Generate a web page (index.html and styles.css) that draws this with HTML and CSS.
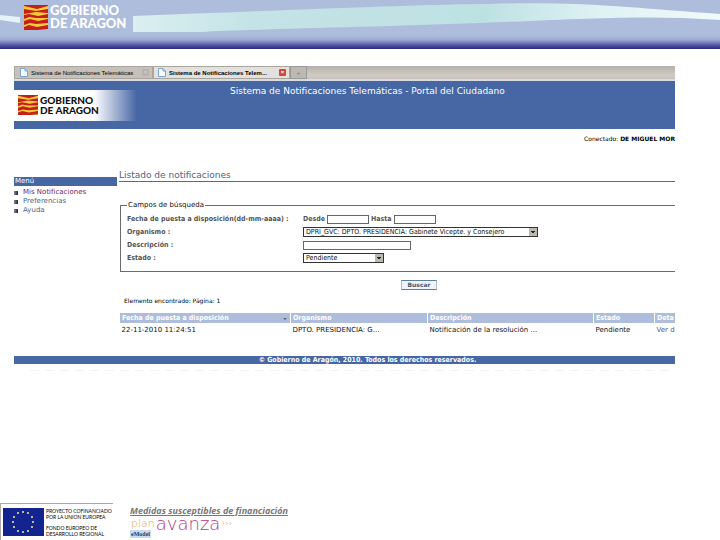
FILE: index.html
```html
<!DOCTYPE html>
<html lang="es">
<head>
<meta charset="utf-8">
<title>Sistema de Notificaciones Telemáticas</title>
<link rel="stylesheet" href="styles.css">
</head>
<body>
<svg class="symbols" aria-hidden="true">
  <symbol id="flag" viewBox="0 0 24 25" preserveAspectRatio="none">
    <rect width="24" height="25" fill="#f8c93c"/>
    <path fill="#c51f1b" d="M0 0H24V1L13 4L0 1ZM0 4L12 6L24 4V8L12 7L0 9ZM0 10L5 9L14 11L24 9V13L12 13L5 12L0 14ZM0 16L6 14L14 16L24 14V18L12 19L6 18L0 20ZM0 22L5 20L13 22L24 20V24L14 25H0Z"/>
  </symbol>
  <symbol id="page" viewBox="0 0 8 9">
    <path d="M.5.5h4.500l2.500 2.500v5.500h-7z" fill="#f4faff" stroke="#7fa3d0"/>
    <path d="M5 .5v2.500h2.500" fill="#b5d0f0" stroke="#7fa3d0"/>
  </symbol>
</svg>

<header class="banner">
  <svg class="wave" viewBox="0 0 720 49" preserveAspectRatio="none" aria-hidden="true">
    <defs>
      <linearGradient id="sea">
        <stop offset="0" stop-color="#dbeff1"/><stop offset=".2" stop-color="#c4e3e6"/>
        <stop offset=".6" stop-color="#bde1e3"/><stop offset=".8" stop-color="#e0f2f4"/>
        <stop offset="1" stop-color="#f0fafa"/>
      </linearGradient>
    </defs>
    <path fill="#e4f3f8" d="M0 15L20 17V23L0 20Z"/>
    <path fill="url(#sea)" d="M133 16C270 11 400 5 480 4C590 1 640 9 720 14V20C650 15 600 18 480 23C370 27 260 29 200 32H133Z"/>
  </svg>
  <div class="logo logo-light">
    <svg class="flag" aria-hidden="true"><use href="#flag"/></svg>
    <span>GOBIERNO<br>DE ARAGON</span>
  </div>
</header>

<main class="portal">
  <div class="tabs">
    <div class="tab"><svg class="page" aria-hidden="true"><use href="#page"/></svg><span>Sistema de Notificaciones Telemáticas</span><button class="close off" aria-label="Cerrar">×</button></div>
    <div class="tab active"><svg class="page" aria-hidden="true"><use href="#page"/></svg><span>Sistema de Notificaciones Telem...</span><button class="close" aria-label="Cerrar">×</button></div>
    <button class="new-tab" aria-label="Nueva pestaña">+</button>
  </div>

  <div class="masthead">
    <div class="brand">
      <div class="logo logo-dark">
        <svg class="flag" aria-hidden="true"><use href="#flag"/></svg>
        <span>GOBIERNO<br>DE ARAGON</span>
      </div>
    </div>
    <h1>Sistema de Notificaciones Telemáticas - Portal del Ciudadano</h1>
  </div>

  <p class="user">Conectado: <b>DE MIGUEL MOR</b></p>

  <div class="columns">
    <nav class="menu">
      <h2>Menú</h2>
      <ul>
        <li><a class="visited" href="#">Mis Notificaciones</a></li>
        <li><a href="#">Preferencias</a></li>
        <li><a href="#">Ayuda</a></li>
      </ul>
    </nav>

    <section class="content">
      <h2>Listado de notificaciones</h2>
      <form>
        <fieldset>
          <legend>Campos de búsqueda</legend>
          <div class="fields">
            <span class="label">Fecha de puesta a disposición(dd-mm-aaaa) :</span>
            <div class="dates">
              <label for="desde">Desde</label><input id="desde" type="text">
              <label for="hasta">Hasta</label><input id="hasta" type="text">
            </div>
            <label for="organismo">Organismo :</label>
            <div class="select wide"><select id="organismo"><option>DPRI_GVC: DPTO. PRESIDENCIA: Gabinete Vicepte. y Consejero</option></select></div>
            <label for="descripcion">Descripción :</label>
            <input class="description" id="descripcion" type="text">
            <label for="estado">Estado :</label>
            <div class="select"><select id="estado"><option>Pendiente</option></select></div>
          </div>
        </fieldset>
        <button class="search" type="button">Buscar</button>
      </form>
      <p class="count">Elemento encontrado: Página: 1</p>
      <table>
        <thead><tr><th class="c-date">Fecha de puesta a disposición<i class="sort"></i></th><th class="c-org">Organismo</th><th class="c-desc">Descripción</th><th class="c-state">Estado</th><th>Deta</th></tr></thead>
        <tbody><tr><td>22-11-2010 11:24:51</td><td>DPTO. PRESIDENCIA: G...</td><td>Notificación de la resolución ...</td><td>Pendiente</td><td><a href="#">Ver d</a></td></tr></tbody>
      </table>
    </section>
  </div>
  <p class="copyright">© Gobierno de Aragón, 2010. Todos los derechos reservados.</p>
  <div class="trace"></div>
</main>

<footer class="funding">
  <div class="eu">
    <svg class="eu-flag" viewBox="0 0 41 28" aria-hidden="true">
      <rect width="41" height="28" fill="#14248e"/>
      <g fill="#f0ee9a">
        <circle cx="20" cy="4" r="1"/><circle cx="25" cy="5" r="1"/><circle cx="29" cy="9" r="1"/>
        <circle cx="30" cy="14" r="1"/><circle cx="29" cy="19" r="1"/><circle cx="25" cy="23" r="1"/>
        <circle cx="20" cy="24" r="1"/><circle cx="15" cy="23" r="1"/><circle cx="11" cy="19" r="1"/>
        <circle cx="10" cy="14" r="1"/><circle cx="11" cy="9" r="1"/><circle cx="15" cy="5" r="1"/>
      </g>
    </svg>
    <div class="eu-text">
      <p>PROYECTO COFINANCIADO<br>POR LA UNION EUROPEA</p>
      <p>FONDO EUROPEO DE<br>DESARROLLO REGIONAL</p>
    </div>
  </div>
  <div class="measures">
    <p class="measures-title">Medidas susceptibles de financiación</p>
    <p class="avanza"><span class="plan">plan</span><span class="name">avanza</span><span class="arrows">›››</span></p>
    <p class="emodel">eModel</p>
  </div>
</footer>
</body>
</html>
```
FILE: styles.css
```css
* { box-sizing: border-box; }

body {
  margin: 0;
  min-height: 100vh;
  display: flex;
  flex-direction: column;
  background: #fff;
  color: #111;
  font: 7px/9px "DejaVu Sans", sans-serif;
}

h1, h2, p, ul { margin: 0; padding: 0; font-weight: normal; }
input, select, button { font: inherit; margin: 0; padding: 0; border-radius: 0; }
a { color: #4a6385; text-decoration: none; }
.symbols { position: absolute; width: 0; height: 0; }

.banner {
  position: relative;
  height: 49px;
  padding: 4px 20px;
  background: linear-gradient(#aebddc 0 36px, #9ba9d2 40px, #5357a5 45px, #29297c 49px);
}
.wave { position: absolute; inset: 0; width: 100%; height: 100%; }

.logo {
  display: flex;
  align-items: center;
  font-family: Lato, sans-serif;
  font-weight: 700;
}
.logo-light {
  position: relative;
  width: 113px;
  padding-left: 4px;
  gap: 2px;
  background: #aebddc;
  color: #fff;
  font-size: 13px;
  font-weight: 900;
  line-height: 13px;
  white-space: nowrap;
}
.logo-light .flag { width: 24px; height: 25px; flex: none; }

.portal { margin: 17px 45px 0 14px; }

.tabs {
  display: flex;
  height: 15px;
  background: linear-gradient(#b5b0a9, #cfcac3 70%, #c8c3bc);
  border-bottom: 2px solid #d9dbe2;
  font: 6px/12px "Liberation Sans", sans-serif;
}
.tab {
  display: flex;
  align-items: center;
  width: 139px;
  gap: 3px;
  padding: 0 3px 0 5px;
  border: 1px solid #aaa59d;
  background: #c6c1ba;
  color: #000;
  white-space: nowrap;
}
.tab.active { background: #e3e1dd; width: 137px; padding-left: 4px; font-weight: bold; }
.page { width: 8px; height: 9px; flex: none; }
.close {
  width: 7px;
  height: 7px;
  margin-left: auto;
  border: 0;
  border-radius: 1px;
  background: #d0473c;
  color: #fff;
  line-height: 7px;
}
.close.off { background: #b8b3ac; color: #ddd; }
.new-tab { width: 17px; border: 1px solid #999; background: #bdb8b0; color: #777; }

.masthead {
  display: flex;
  height: 48px;
  padding-top: 4px;
  background: #4666a4;
  color: #fff;
}
.brand {
  width: 123px;
  height: 31px;
  margin-top: 5px;
  padding: 5px 4px;
  background: linear-gradient(90deg, #fff 65%, #4666a4);
}
.logo-dark { gap: 2px; color: #111; font-size: 10px; line-height: 10px; font-weight: 900; white-space: nowrap; }
.logo-dark .flag { width: 20px; height: 20px; }
h1 { margin-left: 93px; font-size: 9px; line-height: 12px; white-space: nowrap; }

.user { margin-top: 5px; text-align: right; font-size: 6px; color: #000; }

.columns { display: grid; grid-template-columns: 103px 1fr; gap: 2px; margin-top: 27px; }
.menu { padding-top: 7px; font-size: 7px; }
.menu h2 { padding-left: 1px; background: #4666a4; color: #fff; font-size: 7px; }
.menu ul { list-style: none; padding-top: 2px; }
.menu li { display: flex; align-items: center; gap: 5px; }
.menu li::before { content: ""; width: 4px; height: 4px; background: linear-gradient(90deg, #8d7f9c, #2c2440); }
.menu .visited { color: #70246f; }

.content h2 {
  border-bottom: 1px solid #5f6a74;
  color: #4a6385;
  font-size: 9px;
  line-height: 11px;
}
fieldset {
  min-width: 0;
  height: 71px;
  margin: 19px 0 0 1px;
  padding: 4px 0 0 6px;
  border: 1px solid #6b6b6b;
  border-right: 0;
}
legend { padding: 0 1px; color: #111; line-height: 9px; }
.fields {
  display: grid;
  grid-template-columns: 176px 1fr;
  grid-auto-rows: 10px;
  row-gap: 3px;
  align-items: center;
  color: #555;
  font: bold 7px/9px "DejaVu Sans Condensed", "DejaVu Sans", sans-serif;
  white-space: nowrap;
}
.dates { display: flex; gap: 2px; }
.fields input { height: 9px; width: 42px; border: 1px solid #666; background: #fff; }
.fields .description { width: 108px; }
.select { position: relative; width: 81px; height: 10px; }
.select.wide { width: 235px; }
.select select {
  display: block;
  width: 100%;
  height: 10px;
  padding-left: 2px;
  appearance: none;
  border: 1px solid #333;
  background: #fff;
  color: #111;
  font: 7px/8px "DejaVu Sans Condensed", "DejaVu Sans", sans-serif;
}
.select::after {
  content: "";
  position: absolute;
  top: 1px;
  right: 1px;
  width: 8px;
  height: 8px;
  background: linear-gradient(#222, #222) 2px 3px / 4px 1px no-repeat, linear-gradient(#222, #222) 3px 4px / 2px 1px no-repeat, #bbb9b0;
  pointer-events: none;
}
.search {
  display: block;
  width: 36px;
  height: 10px;
  margin: 8px 0 0 282px;
  border: 1px solid #a9bfd3;
  border-block-color: #5d7f9e;
  background: #edf4fa;
  color: #3f5878;
  font: bold 6px/8px "DejaVu Sans", sans-serif;
}
.count { margin: 6px 0 0 5px; font-size: 6px; color: #000; }
table { width: 100%; margin-top: 8px; border-collapse: collapse; table-layout: fixed; white-space: nowrap; }
th {
  height: 10px;
  padding: 0 0 0 2px;
  border-left: 1px solid #fff;
  background: #aebddc;
  color: #fff;
  font: bold 7px/10px "DejaVu Sans Condensed", "DejaVu Sans", sans-serif;
  text-align: left;
}
td { padding: 2px 0 0 2px; line-height: 11px; }
.c-date { width: 171px; }
.c-org { width: 137px; }
.c-desc { width: 166px; }
.c-state { width: 61px; }
.sort { float: right; margin: 5px 3px 0; border: 2px solid transparent; border-top-color: #667; }

.copyright {
  margin-top: 20px;
  padding-left: 46px;
  background: #4666a4;
  color: #fff;
  font: bold 7px/8px "DejaVu Sans Condensed", "DejaVu Sans", sans-serif;
  text-align: center;
}
.trace { margin: 6px 0 0 16px; height: 1px; background: repeating-linear-gradient(90deg, #f4f4f4 0 9px, #fff 9px 15px); }

.funding { display: flex; margin-top: auto; height: 37px; }
.eu { display: flex; width: 113px; padding: 4px 0 0 2px; gap: 2px; border: solid #aaa; border-width: 1px 0 0 1px; }
.eu-flag { width: 41px; height: 28px; flex: none; }
.eu-text { color: #000; font: 900 5px/6px Lato, sans-serif; white-space: nowrap; }
.eu-text p + p { margin-top: 5px; }
.measures { padding: 3px 0 0 17px; white-space: nowrap; }
.measures-title { color: #777; font: italic bold 9px/10px "Open Sans", sans-serif; text-decoration: underline; }
.avanza { display: flex; align-items: center; height: 14px; gap: 1px; padding: 1px 0 0 1px; color: #b8377f; }
.plan, .arrows { color: #dfa65b; font-size: 11px; font-weight: 200; }
.name { font-size: 18px; font-weight: 200; line-height: 8px; }
.arrows { font-size: 9px; }
.emodel { width: 21px; padding-left: 1px; background: #c5dced; color: #17416d; font: bold 6px/8px "Liberation Serif", serif; }
```
